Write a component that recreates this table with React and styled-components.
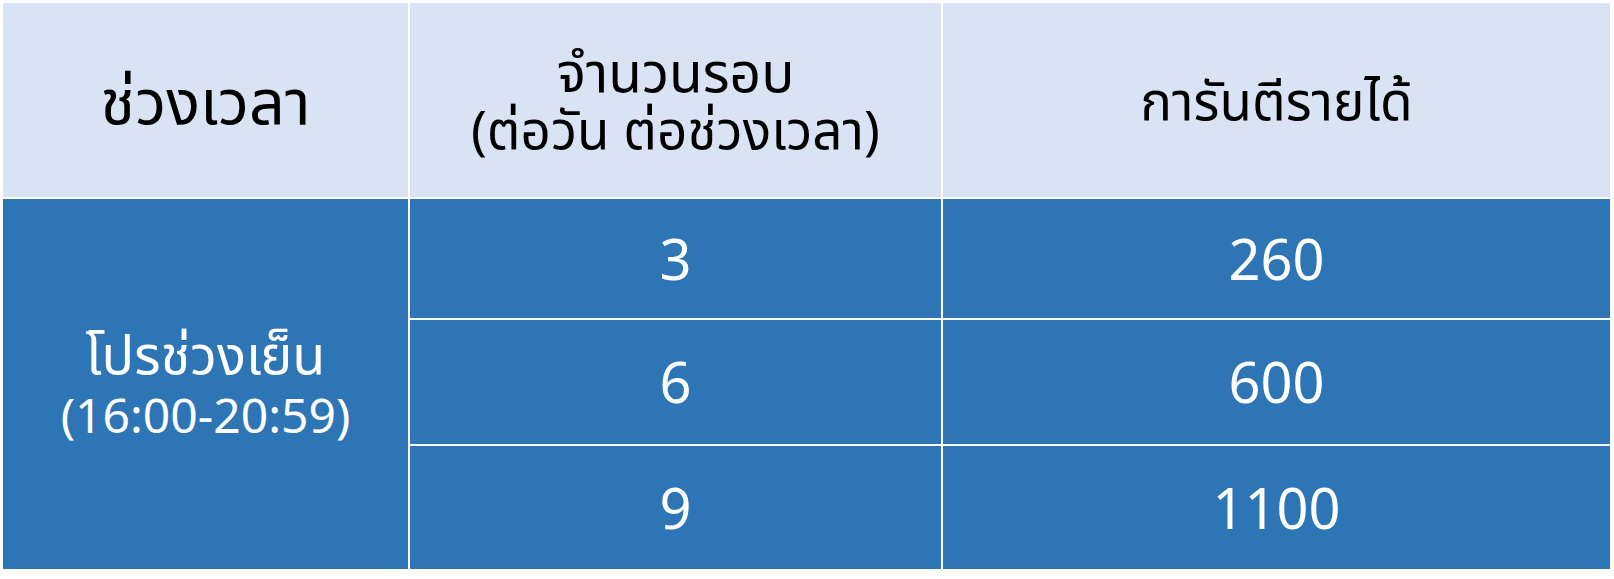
import React from 'react'
import styled, { createGlobalStyle } from 'styled-components'

const GlobalStyle = createGlobalStyle`
  html, body {
    margin: 0;
    padding: 0;
    background: #ffffff;
  }
  body {
    font-family: 'Noto Sans', 'Noto Sans Thai', 'Leelawadee UI', sans-serif;
  }
`

const Table = styled.div`
  display: grid;
  grid-template-columns: 405px 531px 667px;
  grid-template-rows: 194px 119px 124px 123px;
  gap: 2px;
  margin: 3px;
  width: fit-content;
`

const Cell = styled.div`
  display: flex;
  flex-direction: column;
  align-items: center;
  justify-content: center;
  text-align: center;
  font-size: ${(p) => p.$size || 56}px;
  line-height: 1.2;
`

const HeadCell = styled(Cell)`
  background: #dae3f3;
  color: #000000;
`

const BodyCell = styled(Cell)`
  background: #2e75b6;
  color: #ffffff;
  grid-row: ${(p) => p.$rows || 'auto'};
`

// one line of a multi-line cell
const Line = styled.div`
  font-size: ${(p) => p.$size}px;
  line-height: ${(p) => p.$lh}px;
  white-space: nowrap;
`

const rows = [
  { rounds: '3', pay: '260' },
  { rounds: '6', pay: '600' },
  { rounds: '9', pay: '1100' },
]

export default function App() {
  return (
    <>
      <GlobalStyle />
      <Table>
        <HeadCell $size={63}>ช่วงเวลา</HeadCell>
        <HeadCell>
          <Line $size={55} $lh={58}>จำนวนรอบ</Line>
          <Line $size={53} $lh={58}>(ต่อวัน ต่อช่วงเวลา)</Line>
        </HeadCell>
        <HeadCell $size={53}>การันตีรายได้</HeadCell>

        <BodyCell $rows="2 / 5">
          <Line $size={54} $lh={62}>โปรช่วงเย็น</Line>
          <Line $size={48} $lh={62}>(16:00-20:59)</Line>
        </BodyCell>
        {rows.map((r, i) => (
          <React.Fragment key={i}>
            <BodyCell>{r.rounds}</BodyCell>
            <BodyCell>{r.pay}</BodyCell>
          </React.Fragment>
        ))}
      </Table>
    </>
  )
}
